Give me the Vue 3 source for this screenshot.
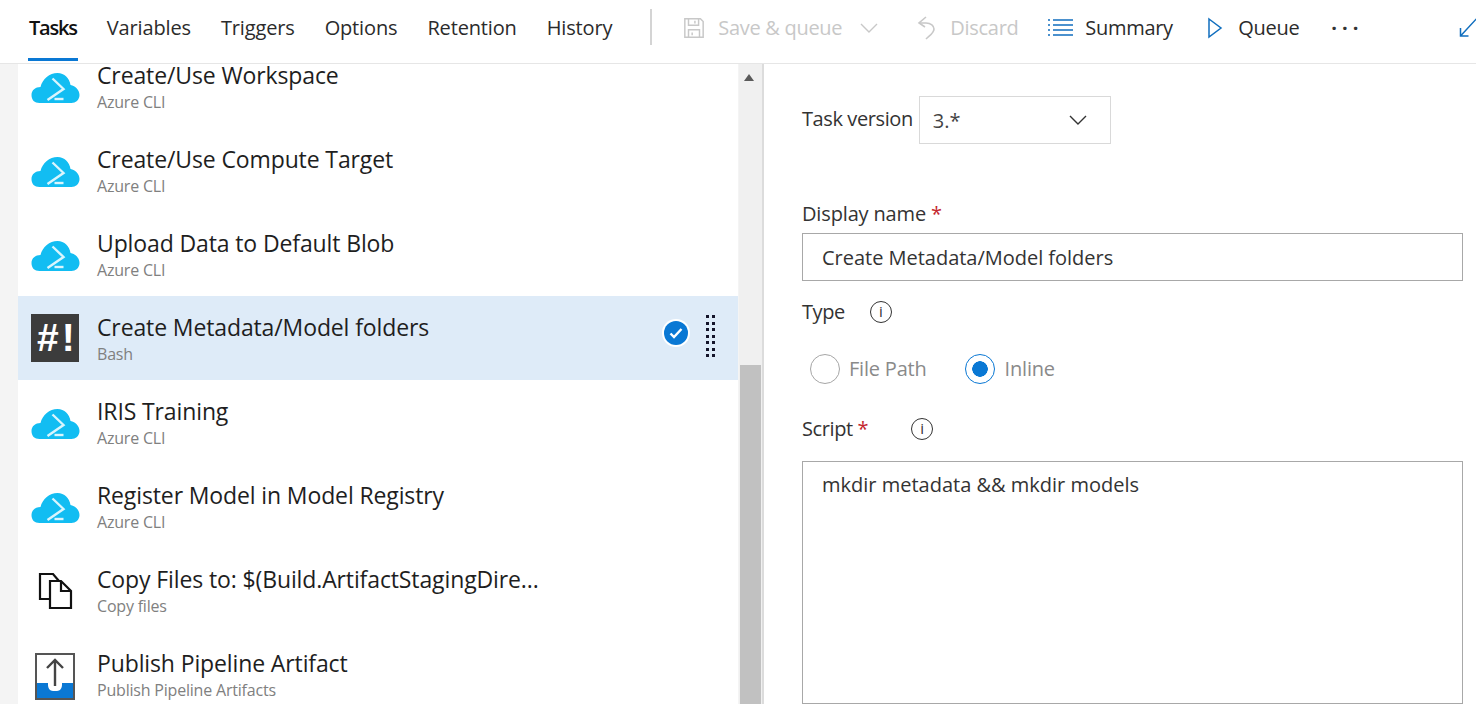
<template>
  <div class="page">
    <header class="topbar">
      <nav class="tabs">
        <a v-for="tab in tabs" :key="tab" class="tab" :class="{ active: tab === 'Tasks' }">{{ tab }}</a>
      </nav>
      <span class="divider"></span>
      <div class="actions">
        <button class="action disabled save">
          <svg width="22" height="22" viewBox="0 0 24 24" fill="none" stroke="#c8c8c8" stroke-width="1.6">
            <path d="M2 2h17l3 3v17H2z" />
            <path d="M6 2v7h11V2M13 4v3M6 22v-8h12v8M10 17v3" />
          </svg>
          <span>Save &amp; queue</span>
          <svg class="caret" width="18" height="18" viewBox="0 0 18 18" fill="none" stroke="#c8c8c8" stroke-width="1.4">
            <path d="M1 5l8 8 8-8" />
          </svg>
        </button>
        <button class="action disabled discard">
          <svg width="22" height="24" viewBox="0 0 22 24" fill="none" stroke="#c8c8c8" stroke-width="1.6">
            <path d="M11 1L4 7l6 4" />
            <path d="M4 7h7c5 0 8 3 8 6 0 4-4 6-8 10" />
          </svg>
          <span>Discard</span>
        </button>
        <button class="action summary">
          <svg width="26" height="17" viewBox="0 0 26 17" fill="none" stroke="#106ebe" stroke-width="1.5">
            <path d="M5 1h20M5 6h20M5 11h20M5 16h20" />
            <path d="M0 1h2M0 6h2M0 11h2M0 16h2" />
          </svg>
          <span>Summary</span>
        </button>
        <button class="action queue">
          <svg width="17" height="22" viewBox="0 0 17 22" fill="none" stroke="#106ebe" stroke-width="1.5">
            <path d="M2 2l12 9-12 9z" />
          </svg>
          <span>Queue</span>
        </button>
        <span class="more">···</span>
      </div>
      <svg class="expand" width="20" height="24" viewBox="0 0 20 24" fill="none" stroke="#106ebe" stroke-width="1.5">
        <path d="M1.5 22L20 2M1.5 14v8h8" />
      </svg>
    </header>

    <main class="body">
      <div class="gutter"></div>
      <section class="list-pane">
        <div class="list">
          <div v-for="task in taskList" :key="task.name" class="row" :class="{ selected: task.selected }">
            <div class="row-icon">
              <svg v-if="task.icon === 'cli'" class="cli" width="49" height="30" viewBox="0 0 48 30">
                <path fill="#12bdf2" d="M8 30C3 30 0 27 0 22c0-5 4-8 9-8C11 6 18 0 26 0c7 0 12 5 13 12 5 1 9 5 9 10 0 5-4 8-8 8z" />
                <path fill="none" stroke="#d9f5fd" stroke-width="2.4" d="M21 5.5L32 16 16 27" />
                <path fill="none" stroke="#d9f5fd" stroke-width="2.4" d="M23 26h9" />
              </svg>
              <span v-else-if="task.icon === 'bash'" class="bash">#!</span>
              <svg v-else-if="task.icon === 'copy'" width="35" height="37" viewBox="0 0 35 37" fill="none" stroke="#111" stroke-width="2.2">
                <path d="M12 27H2V2h13l6 7" />
                <path d="M12 9h11l10 10v17H12z" />
                <path d="M23 9v10h10" />
              </svg>
              <svg v-else class="publish" width="40" height="47" viewBox="0 0 40 47">
                <path fill="#fff" stroke="#555" stroke-width="2" d="M1 1h38v45H1z" />
                <path fill="#0a78d4" d="M2 30h11v2c0 3 2 6 5 6h4c3 0 5-3 5-6v-2h11v15H2z" />
                <path fill="none" stroke="#444" stroke-width="2.4" d="M20 33V7M12 15l8-8 8 8" />
              </svg>
            </div>
            <div class="row-text">
              <div class="row-name">{{ task.name }}</div>
              <div class="row-sub">{{ task.sub }}</div>
            </div>
            <template v-if="task.selected">
              <span class="check">
                <svg width="14" height="12" viewBox="0 0 14 12" fill="none" stroke="#fff" stroke-width="2.4">
                  <path d="M1.5 6.5l3.5 3.5 7.5-8" />
                </svg>
              </span>
              <span class="grip">
                <i v-for="n in 14" :key="n"></i>
              </span>
            </template>
          </div>
        </div>
        <div class="scrollbar">
          <svg class="arrow" width="10" height="7" viewBox="0 0 10 7"><path fill="#5a5a5a" d="M5 0l5 7H0z" /></svg>
          <div class="thumb"></div>
        </div>
      </section>

      <section class="form">
        <div class="version">
          <label class="label">Task version</label>
          <div class="select">
            <span>3.*</span>
            <svg width="18" height="10" viewBox="0 0 18 10" fill="none" stroke="#333" stroke-width="1.4">
              <path d="M1 1l8 8 8-8" />
            </svg>
          </div>
        </div>

        <label class="label name-label">Display name <em>*</em></label>
        <div class="input">Create Metadata/Model folders</div>

        <div class="label type-label">
          <span>Type</span>
          <span class="info">i</span>
        </div>
        <div class="radios">
          <span class="radio"><i class="dot"></i>File Path</span>
          <span class="radio on"><i class="dot"></i>Inline</span>
        </div>

        <div class="label script-label">
          <span>Script <em>*</em></span>
          <span class="info">i</span>
        </div>
        <div class="script">mkdir metadata &amp;&amp; mkdir models</div>
      </section>
    </main>
  </div>
</template>

<script setup>
const tabs = ['Tasks', 'Variables', 'Triggers', 'Options', 'Retention', 'History']

const taskList = [
  { name: 'Create/Use Workspace', sub: 'Azure CLI', icon: 'cli' },
  { name: 'Create/Use Compute Target', sub: 'Azure CLI', icon: 'cli' },
  { name: 'Upload Data to Default Blob', sub: 'Azure CLI', icon: 'cli' },
  { name: 'Create Metadata/Model folders', sub: 'Bash', icon: 'bash', selected: true },
  { name: 'IRIS Training', sub: 'Azure CLI', icon: 'cli' },
  { name: 'Register Model in Model Registry', sub: 'Azure CLI', icon: 'cli' },
  { name: 'Copy Files to: $(Build.ArtifactStagingDire...', sub: 'Copy files', icon: 'copy' },
  { name: 'Publish Pipeline Artifact', sub: 'Publish Pipeline Artifacts', icon: 'publish' }
]
</script>

<style>
html,
body {
  margin: 0;
  background: #fff;
  overflow: hidden;
}
</style>

<style scoped>
.page {
  width: 1476px;
  height: 704px;
  display: flex;
  flex-direction: column;
  overflow: hidden;
  font-family: "Open Sans", "Noto Sans", sans-serif;
  color: #212121;
  background: #fff;
}

.topbar {
  height: 64px;
  box-sizing: border-box;
  flex: none;
  display: flex;
  align-items: center;
  padding-left: 19px;
  border-bottom: 1px solid #e6e6e6;
  font-size: 20px;
  position: relative;
  z-index: 1;
  background: #fff;
}

.tabs {
  display: flex;
  height: 100%;
}

.tab {
  padding: 0 10px;
  margin-right: 10px;
  line-height: 56px;
  letter-spacing: -0.15px;
  color: #2b2b2b;
  position: relative;
}

.tab.active {
  font-weight: 600;
  letter-spacing: -1.2px;
  color: #111;
}

.tab.active::after {
  content: "";
  position: absolute;
  left: 9px;
  right: 9px;
  bottom: 2px;
  height: 3px;
  background: #0a78d4;
}

.divider {
  width: 2px;
  height: 36px;
  background: #d4d4d4;
  margin: -10px 31px 0 18px;
}

.actions {
  display: flex;
  align-items: center;
  margin-top: -8px;
}

.action {
  display: flex;
  align-items: center;
  gap: 13px;
  border: 0;
  padding: 0;
  background: none;
  font: inherit;
  letter-spacing: -0.3px;
  color: #2b2b2b;
}

.action.disabled {
  color: #c8c8c8;
}

.save {
  width: 232px;
}

.caret {
  margin-left: 5px;
}

.discard {
  width: 133px;
}

.summary {
  width: 159px;
  gap: 11px;
}

.queue {
  width: 122px;
  gap: 14px;
}

.more {
  font-size: 20px;
  letter-spacing: 5px;
  margin-left: 2px;
  color: #333;
  font-weight: 700;
  line-height: 1;
}

.expand {
  position: absolute;
  left: 1459px;
  top: 14px;
}

.body {
  flex: 1;
  display: flex;
  min-height: 0;
}

.gutter {
  width: 18px;
  background: #f4f4f4;
}

.list-pane {
  width: 746px;
  flex: none;
  display: flex;
  border-right: 2px solid #dcdcdc;
  box-sizing: border-box;
}

.list {
  width: 720px;
  flex: none;
  margin-top: -20px;
}

.row {
  height: 84px;
  display: flex;
  align-items: center;
  position: relative;
}

.row.selected {
  background: #deebf8;
}

.row-icon {
  width: 74px;
  height: 100%;
  flex: none;
  display: flex;
  align-items: center;
  justify-content: center;
  margin-right: 5px;
}

.cli {
  margin-top: 4px;
}

.publish {
  margin-top: 4px;
}

.bash {
  width: 48px;
  height: 48px;
  box-sizing: border-box;
  padding-left: 6px;
  background: #3c3c3c;
  color: #fff;
  font-family: "Liberation Sans", sans-serif;
  font-weight: 700;
  font-size: 39px;
  letter-spacing: 3px;
  line-height: 48px;
  white-space: nowrap;
}

.row-text {
  flex: 1;
  min-width: 0;
  padding-top: 2px;
}

.row-name {
  font-size: 23px;
  line-height: 24px;
  letter-spacing: -0.12px;
  color: #1e1e1e;
  margin-bottom: 5px;
  white-space: nowrap;
}

.row-sub {
  font-size: 16px;
  line-height: 20px;
  letter-spacing: -0.2px;
  color: #808080;
}

.check {
  position: absolute;
  left: 646px;
  top: 25px;
  width: 24px;
  height: 24px;
  border-radius: 50%;
  background: #0a78d4;
  box-shadow: 0 0 0 2px #fff;
  display: flex;
  align-items: center;
  justify-content: center;
}

.grip {
  position: absolute;
  left: 688px;
  top: 19px;
  display: grid;
  grid-template-columns: 3px 3px;
  grid-auto-rows: 3px;
  column-gap: 3px;
  row-gap: 3.5px;
}

.grip i {
  display: block;
  background: #14142a;
}

.scrollbar {
  width: 24px;
  margin-top: -20px;
  background: #f0f0f0;
  flex: none;
  position: relative;
  border-left: 1px solid #f4f4f4;
  box-sizing: border-box;
}

.arrow {
  position: absolute;
  left: 5px;
  top: 30px;
}

.thumb {
  position: absolute;
  left: 1px;
  width: 21px;
  top: 321px;
  bottom: 0;
  background: #c1c1c1;
}

.form {
  flex: 1;
  min-width: 0;
  padding-left: 38px;
  padding-top: 32px;
  display: flex;
  flex-direction: column;
}

.label {
  font-size: 20px;
  line-height: 28px;
  letter-spacing: -0.4px;
  color: #333;
}

.label em {
  font-style: normal;
  color: #c4262e;
}

.version {
  display: flex;
  align-items: center;
  gap: 6px;
}

.version .label {
  padding-bottom: 2px;
}

.select {
  width: 192px;
  height: 48px;
  box-sizing: border-box;
  border: 1px solid #d9d9d9;
  display: flex;
  align-items: center;
  justify-content: space-between;
  padding: 0 23px 0 13px;
  font-size: 20px;
  color: #444;
}

.name-label {
  margin-top: 56px;
  display: block;
  letter-spacing: -0.15px;
}

.input {
  width: 661px;
  height: 48px;
  margin-top: 5px;
  box-sizing: border-box;
  border: 1px solid #a8a8a8;
  padding-left: 19px;
  font-size: 20px;
  line-height: 48px;
  letter-spacing: -0.02px;
  color: #333;
}

.type-label {
  margin-top: 17px;
  display: flex;
  align-items: center;
  gap: 25px;
}

.script-label {
  margin-top: 31px;
  display: flex;
  align-items: center;
  gap: 43px;
}

.info {
  width: 22px;
  height: 22px;
  box-sizing: border-box;
  border: 1.5px solid #333;
  border-radius: 50%;
  font-size: 15px;
  line-height: 19px;
  text-align: center;
  letter-spacing: 0;
}

.radios {
  display: flex;
  gap: 38px;
  margin-top: 28px;
  padding-left: 8px;
}

.radio {
  display: flex;
  align-items: center;
  gap: 9px;
  font-size: 20px;
  line-height: 30px;
  letter-spacing: -0.2px;
  color: #8a8a8a;
}

.radio.on {
  gap: 10px;
}

.dot {
  width: 30px;
  height: 30px;
  box-sizing: border-box;
  border: 1px solid #a6a6a6;
  border-radius: 50%;
  display: block;
}

.radio.on .dot {
  border-color: #0a78d4;
  background: radial-gradient(circle, #0a78d4 7.5px, #fff 8px);
}

.script {
  width: 661px;
  height: 300px;
  margin-top: 18px;
  box-sizing: border-box;
  border: 1px solid #a8a8a8;
  padding: 8px 19px;
  font-size: 20px;
  line-height: 30px;
  letter-spacing: 0;
  color: #333;
}
</style>
